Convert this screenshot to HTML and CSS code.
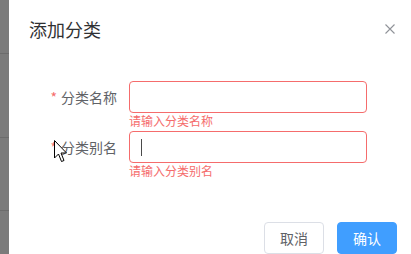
FILE: index.html
```html
<!DOCTYPE html>
<html lang="zh-CN">
<head>
<meta charset="utf-8">
<link rel="stylesheet" href="styles.css">
</head>
<body>
<div class="page">
  <div class="backdrop">
    <div class="bline l1"></div>
    <div class="bline l2"></div>
    <div class="bline l3"></div>
  </div>
  <div class="dialog">
    <div class="header">
      <span class="title">添加分类</span>
      <svg class="close" width="10" height="10" viewBox="0 0 10 10"><path d="M0.5 0.5 L9.5 9.5 M9.5 0.5 L0.5 9.5" stroke="#909399" stroke-width="1.1" fill="none"/></svg>
    </div>
    <div class="form">
      <div class="item">
        <label class="label"><span class="star">*</span>分类名称</label>
        <div class="content">
          <div class="input"></div>
          <div class="error">请输入分类名称</div>
        </div>
      </div>
      <div class="item">
        <label class="label"><span class="star">*</span>分类别名</label>
        <div class="content">
          <div class="input"><span class="caret"></span></div>
          <div class="error">请输入分类别名</div>
        </div>
      </div>
    </div>
    <div class="footer">
      <button class="btn">取消</button>
      <button class="btn primary">确认</button>
    </div>
  </div>
  <svg class="pointer" width="14" height="24" viewBox="0 0 14 24"><path d="M0.5 0.5 L0.5 18 L4.5 14 L7.5 21.5 L10 20.5 L7 13 L12.5 13 Z" fill="#fff" stroke="#000" stroke-width="1" stroke-linejoin="miter"/></svg>
</div>
</body>
</html>
```

FILE: styles.css
```css
* { box-sizing: border-box; }
html, body { margin: 0; padding: 0; background: #fff; }
body {
  font-family: "Noto Sans CJK SC", "Noto Sans", sans-serif;
  width: 411px;
  height: 254px;
  overflow: hidden;
}
.page {
  position: relative;
  display: flex;
  width: 411px;
  height: 254px;
}
.backdrop {
  position: relative;
  width: 9px;
  height: 254px;
  background: #7b7b7b;
  flex: none;
}
.bline {
  position: absolute;
  left: 0;
  width: 9px;
  height: 1px;
  background: #6c6c6c;
}
.l1 { top: 53px; }
.l2 { top: 137px; }
.l3 { top: 210px; }
.dialog {
  flex: 1;
  background: #fff;
  display: flex;
  flex-direction: column;
}
.header {
  display: flex;
  justify-content: space-between;
  align-items: center;
  padding: 17px 16px 0 20px;
  height: 41px;
}
.title {
  font-size: 18px;
  line-height: 24px;
  color: #303133;
}
.close { display: block; margin-top: -1px; }
.form {
  padding: 40px 44px 0 0;
}
.item {
  display: flex;
  margin-bottom: 18px;
}
.label {
  width: 120px;
  padding-right: 12px;
  text-align: right;
  font-size: 14px;
  line-height: 32px;
  color: #606266;
  flex: none;
}
.star {
  color: #f56c6c;
  margin-right: 4px;
}
.content {
  flex: 1;
  position: relative;
}
.input {
  height: 32px;
  border: 1px solid #f56c6c;
  border-radius: 4px;
  padding: 6px 11px;
  display: flex;
  align-items: center;
}
.caret {
  width: 1px;
  height: 17px;
  background: #4a4a4a;
}
.error {
  position: absolute;
  left: 0;
  top: 100%;
  padding-top: 2px;
  font-size: 12px;
  line-height: 1;
  color: #f56c6c;
  white-space: nowrap;
}
.footer {
  display: flex;
  justify-content: flex-end;
  gap: 13px;
  padding: 41px 14px 0 0;
}
.btn {
  font-family: "Noto Sans CJK SC", "Noto Sans", sans-serif;
  width: 60px;
  height: 32px;
  padding: 0;
  font-size: 14px;
  line-height: 30px;
  border-radius: 4px;
  border: 1px solid #dcdfe6;
  background: #fff;
  color: #606266;
}
.btn.primary {
  background: #409eff;
  border-color: #409eff;
  color: #fff;
}
.pointer {
  position: absolute;
  left: 54px;
  top: 140px;
}
```
